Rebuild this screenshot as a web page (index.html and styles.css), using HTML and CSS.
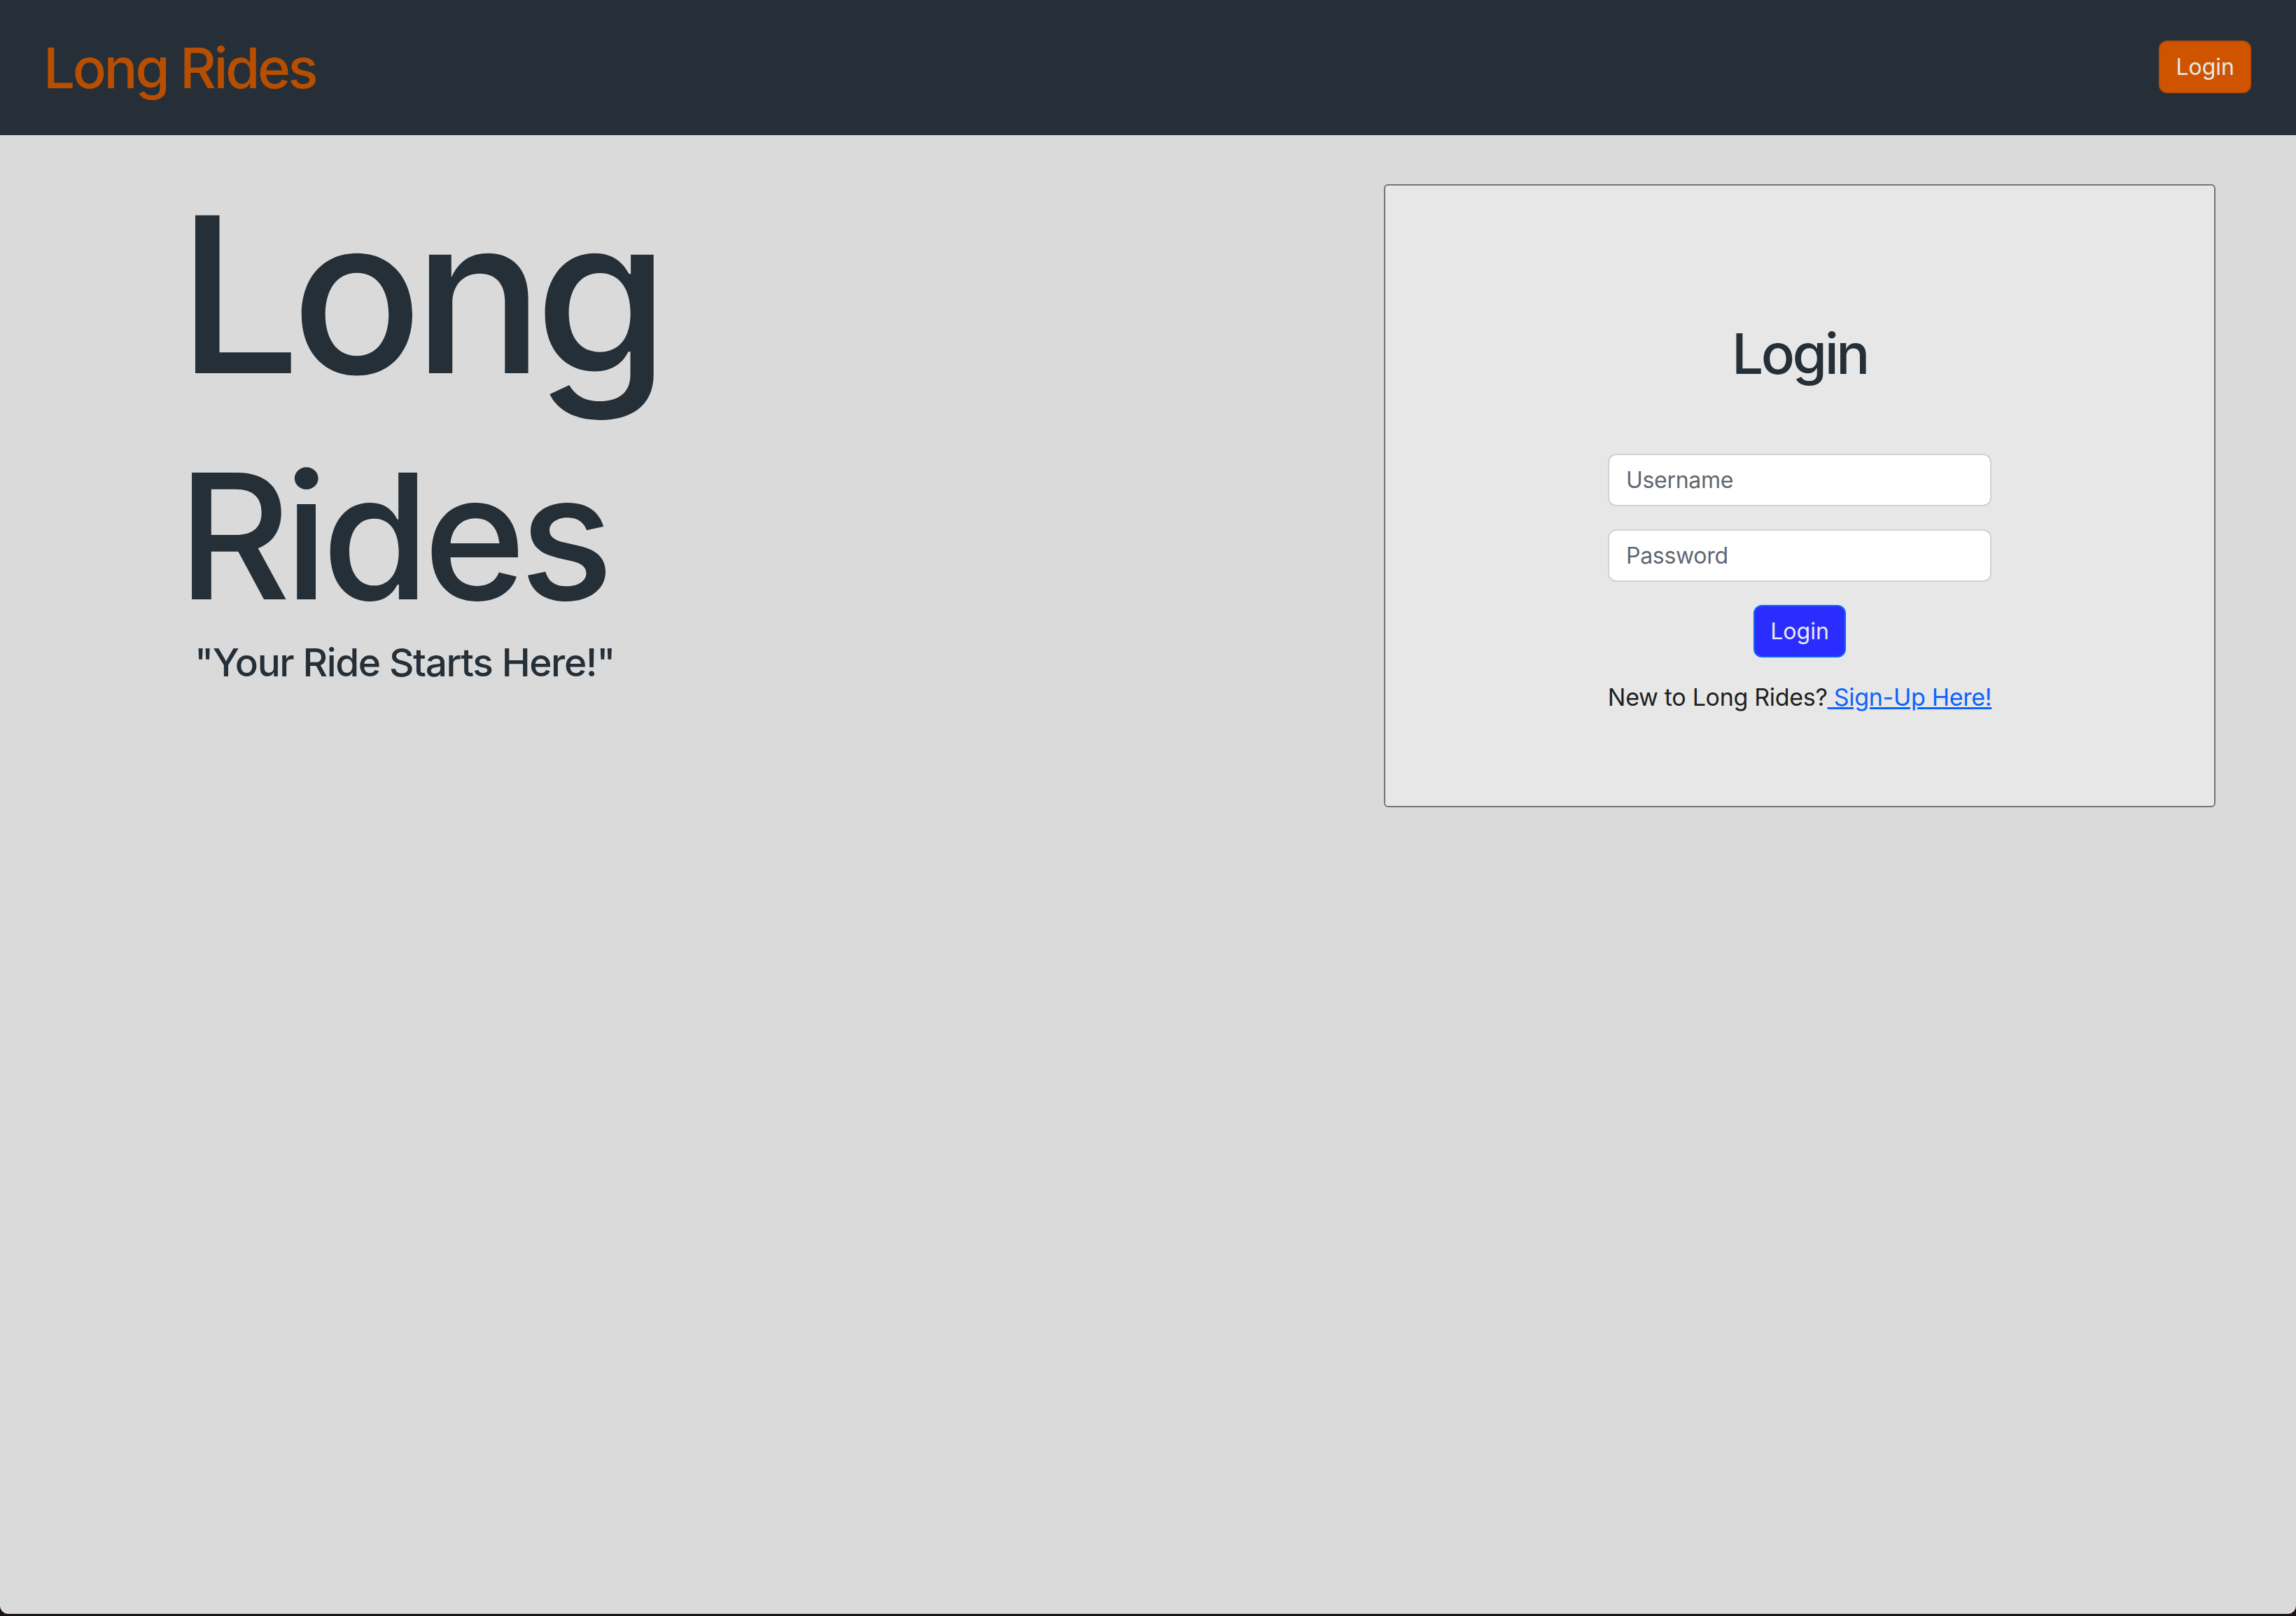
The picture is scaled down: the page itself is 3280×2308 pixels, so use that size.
FILE: index.html
```html
<!DOCTYPE html>
<html lang="en">
<head>
<meta charset="utf-8">
<title>Long Rides</title>
<link rel="stylesheet" href="styles.css">
</head>
<body>
<div class="window">
  <header class="navbar">
    <a class="brand" href="#">Long Rides</a>
    <button class="nav-login" type="button">Login</button>
  </header>
  <main class="page">
    <section class="hero">
      <h1 class="hero-long">Long</h1>
      <h1 class="hero-rides">Rides</h1>
      <p class="tagline">"Your Ride Starts Here!"</p>
    </section>
    <section class="card">
      <h2 class="card-title">Login</h2>
      <form class="login-form">
        <input class="field" type="text" placeholder="Username">
        <input class="field" type="password" placeholder="Password">
        <button class="btn-login" type="button">Login</button>
      </form>
      <p class="signup">New to Long Rides?<a href="#"> Sign-Up Here!</a></p>
    </section>
  </main>
</div>
</body>
</html>
```
FILE: styles.css
```css
* { box-sizing: border-box; }
html { background: #1c1414; }
body {
  margin: 0;
  font-family: Inter, "Noto Sans", "Liberation Sans", sans-serif;
  color: #252f38;
}
.window {
  min-height: 2305px;
  background: #dadada;
  border-radius: 0 0 12px 12px;
  overflow: hidden;
}
.navbar {
  height: 193px;
  background: #262f38;
  display: flex;
  align-items: center;
  justify-content: space-between;
  padding: 0 64px 0 62px;
}
.brand {
  font-size: 80px;
  line-height: 96px;
  font-weight: 500;
  color: #b84e00;
  text-decoration: none;
  letter-spacing: -3.5px;
}
.nav-login {
  height: 75px;
  padding: 0 22px;
  font-family: inherit;
  font-size: 32px;
  color: #e3e9e9;
  background: #d05400;
  border: 2px solid #bf4c00;
  border-radius: 12px;
  margin-top: -2px;
}
.page {
  display: flex;
  justify-content: space-between;
  align-items: flex-start;
  padding: 70px 115px 0 254px;
}
.hero { padding-top: 3px; }
.hero-long, .hero-rides {
  margin: 0;
  font-weight: 500;
  line-height: 1;
}
.hero-long { font-size: 310px; letter-spacing: -13px; }
.hero-rides { font-size: 249px; margin-top: 65px; letter-spacing: -9px; }
.tagline {
  margin: 23px 0 0 24px;
  font-size: 55px;
  line-height: 66px;
  font-weight: 500;
  letter-spacing: -1.4px;
}
.card {
  width: 1188px;
  height: 890px;
  background: #e7e7e7;
  border: 2px solid #747474;
  border-radius: 6px;
  padding-top: 192px;
  display: flex;
  flex-direction: column;
  align-items: center;
}
.card-title {
  margin: 0;
  font-size: 80px;
  line-height: 96px;
  font-weight: 500;
  color: #252f38;
  letter-spacing: -3.5px;
}
.login-form {
  margin-top: 95px;
  width: 548px;
  display: flex;
  flex-direction: column;
  align-items: center;
  gap: 33px;
}
.field {
  width: 100%;
  height: 75px;
  padding: 0 24px;
  font-family: inherit;
  font-size: 32px;
  letter-spacing: -0.3px;
  color: #212529;
  background: #fff;
  border: 2px solid #ced2d9;
  border-radius: 12px;
}
.field::placeholder { color: #5f6770; }
.btn-login {
  height: 75px;
  padding: 0 22px;
  font-family: inherit;
  font-size: 32px;
  color: #e9ecf5;
  background: #2b2dff;
  border: 2px solid #1462fb;
  border-radius: 12px;
}
.signup {
  margin: 32px 0 0;
  font-size: 34px;
  line-height: 50px;
  letter-spacing: -0.3px;
  color: #1d1f22;
}
.signup a { color: #0d63fd; }
```
